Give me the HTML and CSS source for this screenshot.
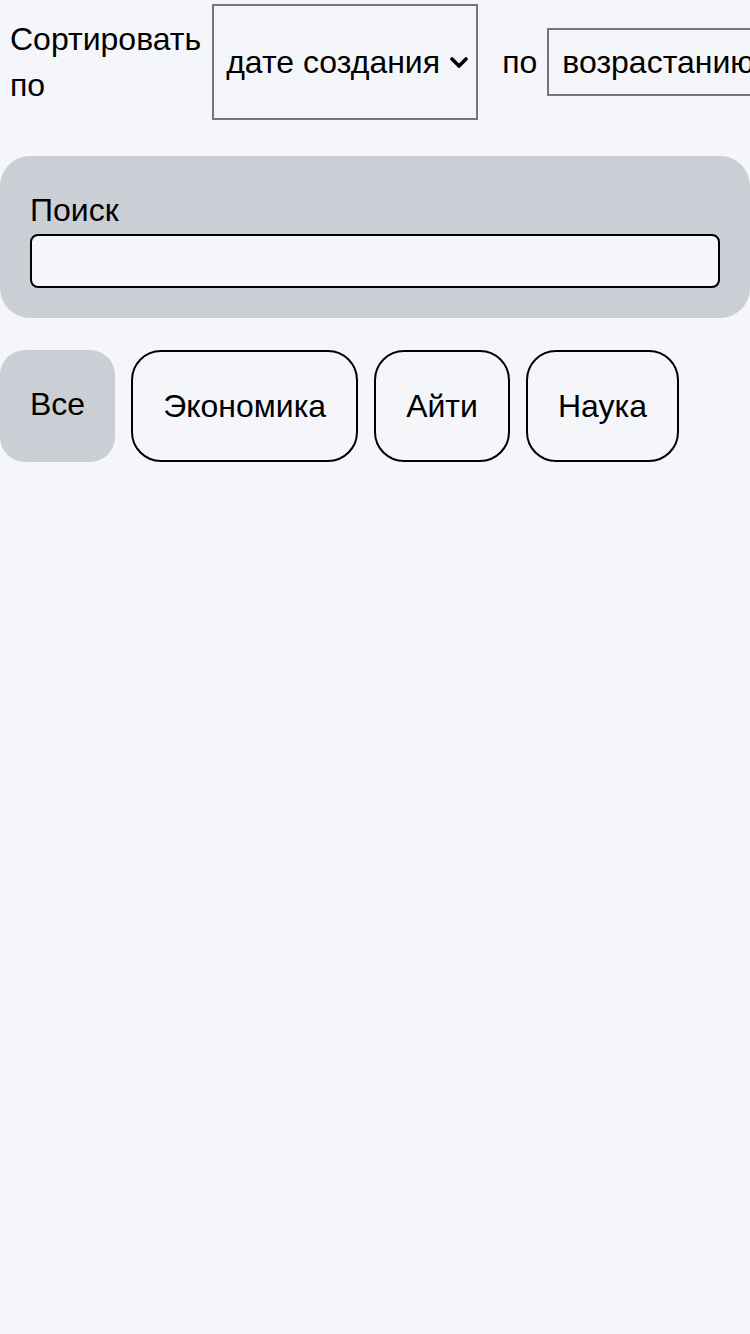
FILE: index.html
```html
<!DOCTYPE html>
<html lang="ru">
<head>
<meta charset="utf-8">
<title>Новости</title>
<link rel="stylesheet" href="styles.css">
</head>
<body>
<div class="sort-row">
  <label class="sort-label" for="sort-field">Сортировать по</label>
  <select id="sort-field" class="select select-field">
    <option>дате создания</option>
    <option>названию</option>
  </select>
  <span class="sort-by">по</span>
  <select class="select select-order">
    <option>возрастанию</option>
    <option>убыванию</option>
  </select>
</div>
<div class="search-panel">
  <label class="search-label" for="search">Поиск</label>
  <input id="search" class="search-input" type="text">
</div>
<div class="chips">
  <button class="chip chip-active">Все</button>
  <button class="chip">Экономика</button>
  <button class="chip">Айти</button>
  <button class="chip">Наука</button>
</div>
</body>
</html>
```
FILE: styles.css
```css
html, body {
  margin: 0;
  padding: 0;
  background: #f5f6fa;
  overflow: hidden;
}
body {
  font-family: "Liberation Sans", Arial, sans-serif;
  font-size: 32px;
  color: #000;
  width: 750px;
}
.sort-row {
  display: flex;
  align-items: center;
  padding: 4px 0 0 10px;
  white-space: nowrap;
}
.sort-label {
  white-space: normal;
  width: min-content;
  line-height: 46px;
  flex-shrink: 0;
}
.select {
  -webkit-appearance: none;
  appearance: none;
  font-family: inherit;
  font-size: 32px;
  color: #000;
  background-color: #f5f6fa;
  border: 2px solid #767676;
  border-radius: 0;
  box-sizing: border-box;
  padding: 0 36px 0 12px;
  flex-shrink: 0;
  background-image: url("data:image/svg+xml,%3Csvg xmlns='http://www.w3.org/2000/svg' width='18' height='11' viewBox='0 0 18 11'%3E%3Cpath d='M2 2l7 7 7-7' fill='none' stroke='%23000' stroke-width='3.6' stroke-linecap='round' stroke-linejoin='round'/%3E%3C/svg%3E");
  background-repeat: no-repeat;
  background-position: right 8px center;
  background-size: 18px 11px;
}
.select-field {
  width: 266px;
  height: 116px;
  margin-left: 11px;
}
.select-order {
  width: 266px;
  height: 68px;
  padding-left: 13px;
}
.sort-by {
  margin: 0 10px 0 24px;
}
.search-panel {
  margin-top: 36px;
  background: #cbced5;
  border-radius: 30px;
  padding: 30px;
}
.search-label {
  display: block;
  line-height: 48px;
}
.search-input {
  display: block;
  box-sizing: border-box;
  width: 100%;
  height: 54px;
  border: 2px solid #000;
  border-radius: 8px;
  background: #f5f6fa;
  font-family: inherit;
  font-size: 32px;
  padding: 0 10px;
  outline: none;
}
.chips {
  display: flex;
  gap: 16px;
  margin-top: 32px;
}
.chip {
  font-family: inherit;
  font-size: 32px;
  color: #000;
  background: transparent;
  border: 2px solid #000;
  border-radius: 30px;
  padding: 35px 30px;
  line-height: 38px;
  cursor: pointer;
}
.chip-active {
  background: #cbced5;
  border: none;
  border-radius: 25px;
  display: flex;
  align-items: flex-start;
}
```
